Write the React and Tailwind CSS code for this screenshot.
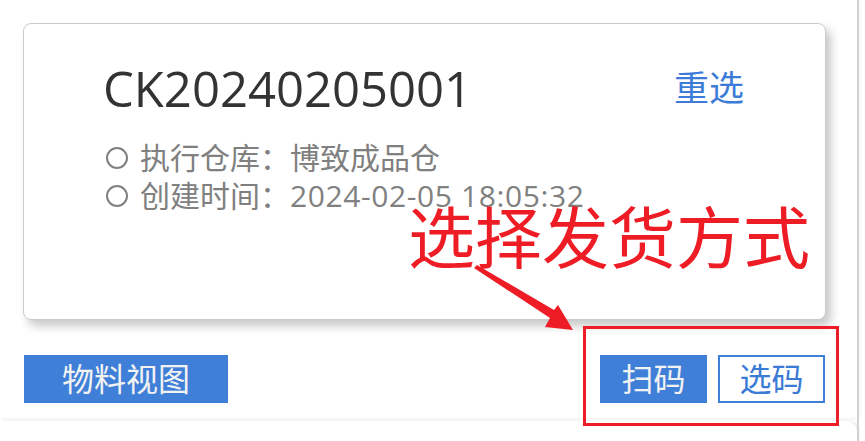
import React from 'react';

const font = { fontFamily: '"Open Sans", "Noto Sans CJK SC", sans-serif' };

const InfoLine = ({ label, value, wide }) => (
  <div className="flex items-center h-[38px] text-[30px] text-[#808080] leading-[38px]">
    <span className="inline-block w-[22px] h-[22px] rounded-full border-2 border-[#808080] mr-[12px]"></span>
    <span>{label}</span>
    <span className={wide ? 'tracking-[0.6px]' : ''}>{value}</span>
  </div>
);

const App = () => {
  return (
    <div className="relative w-[865px] h-[441px] overflow-hidden bg-white flex" style={font}>
      <div className="w-[857px] flex flex-col">
        <section className="h-[426px] bg-white shadow-[2px_0_3px_rgba(0,0,0,0.1)] pt-[23px]">
          <div className="ml-[23px] w-[803px] h-[297px] bg-white border border-[#cccccc] rounded-[8px] shadow-[5px_6px_10px_rgba(0,0,0,0.22)] pl-[79px] pr-[81px] pt-[36px]">
            <div className="flex items-center justify-between h-[56px]">
              <h1 className="text-[49px] leading-[56px] text-[#333333]">CK20240205001</h1>
              <a className="text-[35px] leading-[56px] text-[#3c7bd8] cursor-pointer">重选</a>
            </div>
            <div className="mt-[23px] pl-[3px]">
              <InfoLine label="执行仓库：" value="博致成品仓" />
              <InfoLine label="创建时间：" value="2024-02-05 18:05:32" wide />
            </div>
          </div>

          <div className="flex justify-between items-center mt-[35px] pl-[24px] pr-[32px]">
            <button className="w-[204px] h-[48px] bg-[#3f7fd7] text-[#f2f2f2] text-[32px] leading-[48px]">物料视图</button>
            <div className="flex gap-[11px]">
              <button className="w-[107px] h-[48px] bg-[#3f7fd7] text-[#f2f2f2] text-[32px] leading-[48px]">扫码</button>
              <button className="w-[107px] h-[48px] border-2 border-[#3f7fd7] bg-white text-[#3a7bd5] text-[32px] leading-[44px]">选码</button>
            </div>
          </div>
        </section>
        <section className="mt-[3px] h-[20px] bg-white rounded-tr-[10px] shadow-[2px_0_3px_rgba(0,0,0,0.1)]"></section>
      </div>
      <div className="w-[2px] h-full bg-[#d2d2d2]"></div>

      {/* annotation overlay */}
      <div className="absolute left-[408px] top-[195px] text-[67px] leading-[84px] text-[#ee1d25] whitespace-nowrap">选择发货方式</div>
      <svg className="absolute left-0 top-0" width="865" height="441">
        <polygon points="474,268 477,265 554,310 558,305 573,330 545,327 550,318" fill="#ee1d25" />
      </svg>
      <div className="absolute left-[583px] top-[326px] w-[256px] h-[100px] border-[3px] border-[#ee1d25]"></div>
    </div>
  );
};

export default App;
